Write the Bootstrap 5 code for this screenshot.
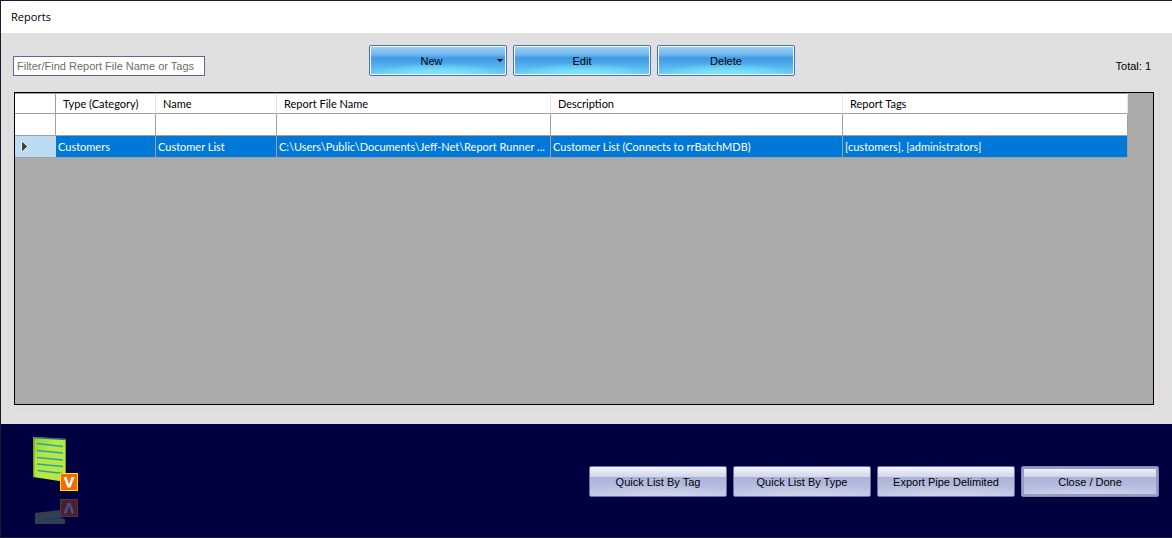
<!DOCTYPE html>
<html lang="en">
<head>
<meta charset="utf-8">
<meta name="viewport" content="width=device-width, initial-scale=1">
<title>Reports</title>
<link href="https://cdn.jsdelivr.net/npm/bootstrap@5.3.0/dist/css/bootstrap.min.css" rel="stylesheet">
<style>
  body {
    font-family: "Liberation Sans", Arial, sans-serif;
    font-size: 11px;
    line-height: 16px;
    color: #000;
    background: #e0e0e0;
    border: 1px solid #1a1a30;
    border-right: 0;
  }
  .title-bar {
    height: 32px;
    padding: 0 10px;
    background: #fff;
    font-family: "Open Sans", sans-serif;
  }
  .title-bar h1 { font-size: 11px; }
  .tool-bar {
    display: grid;
    grid-template-columns: 1fr auto 1fr;
    padding: 12px 21px 11px 12px;
  }
  .button-row { gap: 6px; }
  .filter-box {
    width: 192px;
    height: 20px;
    margin-top: 11px;
    padding: 0 3px;
    border: 1px solid #646496;
    border-radius: 0;
    font-size: 11px;
    line-height: 18px;
  }
  .filter-box::placeholder { color: #6d6d6d; }
  .total { margin-top: 13px; }
  .btn-form {
    width: 138px;
    height: 31px;
    padding: 0;
    border-radius: 2px;
    font-size: 11px;
    line-height: 16px;
    color: #000;
  }
  .btn-form:hover { color: #000; }
  .btn-sky, .btn-sky:hover {
    border: 1px solid #3f72c0;
    box-shadow: inset 0 0 0 1px #fff;
    background:
      radial-gradient(ellipse 55% 40% at 50% 100%, #7be4f9 30%, transparent 100%),
      linear-gradient(#9fd3f7 0, #6fb7f0 30%, #3f98e6 42%, #50b0ec 65%, #6ccdf4 100%);
  }
  .cell-arrow { width: 13px; height: 5px; }
  .btn-pale, .btn-pale:hover {
    border: 1px solid #6e6ea6;
    background:
      radial-gradient(ellipse 60% 35% at 50% 100%, #cfd3ea 20%, transparent 100%),
      linear-gradient(#f6f6fc 0, #d2d5ea 34%, #abb2d9 36%, #c3c9e6 100%);
  }
  .btn-default, .btn-default:hover {
    border-color: #8487b4;
    box-shadow: inset 0 0 0 2px #9a9cc8;
  }
  .report-group {
    margin: 0 12px 14px 7px;
    padding: 4px 5px;
    border: 1px solid #dcdcdc;
    background: linear-gradient(#e0e0e0 70%, #e2dfe0);
  }
  .grid-frame {
    padding-right: 25px;
    border: 1px solid #000;
    background: #ababab;
  }
  .report-grid {
    table-layout: fixed;
    border-collapse: separate;
    border-spacing: 0;
    color: #000;
    font-family: Lato, sans-serif;
  }
  .report-grid th, .report-grid td {
    padding: 0 2px;
    border-right: 1px solid #a0a0a0;
    border-bottom: 1px solid #a0a0a0;
    background: #fff;
    font-weight: 400;
    overflow: hidden;
    white-space: nowrap;
    vertical-align: middle;
  }
  .report-grid thead th { height: 21px; padding: 0 7px; border-top: 1px solid #a0a0a0; border-right-color: #e5e5e5; }
  .report-grid thead .row-mark { border-right-color: #a0a0a0; }
  .report-grid tbody tr { height: 22px; }
  .report-grid .picked td { background: #0078d7; color: #fff; }
  .report-grid .picked .row-mark { background: #bcdcf4; padding: 0 5px; border-color: #bcdcf4; border-bottom-color: #a0a0a0; }
  .row-mark svg { display: block; }
  .c-mark { width: 41px; }
  .c-type { width: 100px; }
  .c-name { width: 121px; }
  .c-file { width: 274px; }
  .c-desc { width: 292px; }
  .action-bar {
    padding: 12px 13px 10px 29px;
    background: #000040;
  }
  .action-buttons { margin-top: 30px; }
</style>
</head>
<body class="d-flex flex-column min-vh-100">
  <header class="title-bar d-flex align-items-center"><h1 class="m-0 fw-normal">Reports</h1></header>

  <div class="tool-bar">
    <div><input type="text" class="filter-box form-control" placeholder="Filter/Find Report File Name or Tags" aria-label="Filter/Find Report File Name or Tags"></div>
    <div class="button-row d-flex">
      <button type="button" class="btn btn-form btn-sky d-flex align-items-center">
        <span class="flex-grow-1 text-center">New</span>
        <svg class="cell-arrow" viewBox="0 0 13 5" aria-hidden="true"><path d="M4 1h6L7 4z" fill="#000"/></svg>
      </button>
      <button type="button" class="btn btn-form btn-sky">Edit</button>
      <button type="button" class="btn btn-form btn-sky">Delete</button>
    </div>
    <div class="total text-end">Total: 1</div>
  </div>

  <main class="report-group flex-grow-1 d-flex flex-column">
    <div class="grid-frame flex-grow-1">
      <table class="report-grid w-100">
        <colgroup><col class="c-mark"><col class="c-type"><col class="c-name"><col class="c-file"><col class="c-desc"><col></colgroup>
        <thead>
          <tr><th class="row-mark"></th><th>Type (Category)</th><th>Name</th><th>Report File Name</th><th>Description</th><th>Report Tags</th></tr>
        </thead>
        <tbody>
          <tr><td class="row-mark"></td><td></td><td></td><td></td><td></td><td></td></tr>
          <tr class="picked">
            <td class="row-mark"><svg width="9" height="13" viewBox="0 0 9 13" aria-hidden="true"><path d="M1.500 1v11L7.500 6.500z" fill="#404040" stroke="#e8f4fc"/><path d="M2 2v9L7 6.500z" fill="#404040"/></svg></td>
            <td>Customers</td><td>Customer List</td><td>C:\Users\Public\Documents\Jeff-Net\Report Runner ...</td><td>Customer List (Connects to rrBatchMDB)</td><td>[customers], [administrators]</td>
          </tr>
        </tbody>
      </table>
    </div>
  </main>

  <footer class="action-bar d-flex justify-content-between align-items-start">
    <svg width="52" height="91" viewBox="0 0 52 91" role="img" aria-label="Report list">
      <defs>
        <linearGradient id="sheet" x1="0" y1="0" x2="1" y2="1"><stop offset="0" stop-color="#94cc34"/><stop offset=".35" stop-color="#b6e83e"/><stop offset="1" stop-color="#bce63e"/></linearGradient>
      </defs>
      <path d="M3 1l33 2v43L3 41z" fill="url(#sheet)"/>
      <path d="M3 2v39l1.500 .3V2zM35 4v41h1V4z" fill="#7ba02c"/>
      <path d="M4 1.500l32 2" stroke="#1c7890" stroke-width="1.500"/>
      <path d="M6.500 7.500l26.500 3M7 14.500l26 2.500M7 21.500l26 2.500M7 28l26 2.500M7.500 34.500l25.500 3" stroke="#22a4b8" stroke-width="1.500"/>
      <rect x="30.500" y="37.500" width="17" height="17" fill="#ff6500" stroke="#ffe800"/><path d="M33.500 41h3l2.500 7.500 2.500-7.500h3l-4 10.500h-3z" fill="#fff"/>
      <path d="M5 77l25-3v8l5 1v5H5z" fill="#343e4c"/>
      <path d="M7 85l25-3" stroke="#143c80" stroke-width="1.500"/>
      <rect x="30.500" y="63.500" width="17" height="17" fill="#4c1e30" stroke="#4c3c34"/><path d="M33.500 77.500h3l2.500-7.500 2.500 7.500h3l-4-10.500h-3z" fill="#4c4c80"/>
    </svg>
    <div class="action-buttons button-row d-flex">
      <button type="button" class="btn btn-form btn-pale">Quick List By Tag</button>
      <button type="button" class="btn btn-form btn-pale">Quick List By Type</button>
      <button type="button" class="btn btn-form btn-pale">Export Pipe Delimited</button>
      <button type="button" class="btn btn-form btn-pale btn-default">Close / Done</button>
    </div>
  </footer>
  <script src="https://cdn.jsdelivr.net/npm/bootstrap@5.3.0/dist/js/bootstrap.bundle.min.js"></script>
</body>
</html>
